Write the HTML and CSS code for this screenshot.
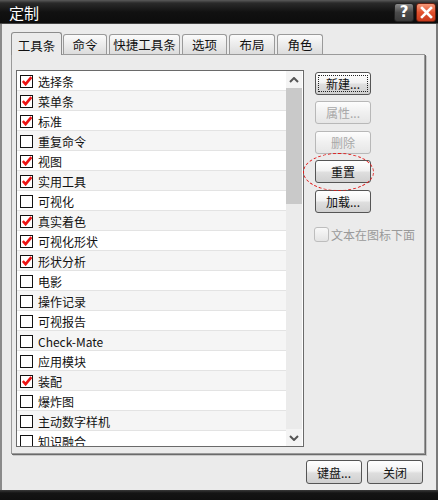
FILE: index.html
```html
<!DOCTYPE html>
<html>
<head>
<meta charset="utf-8">
<link rel="stylesheet" href="styles.css">
</head>
<body>
<div class="window">
  <div class="titlebar">
    <span class="title">定制</span>
    <div class="tbtns">
      <span class="tbtn help">?</span>
      <span class="tbtn close"><svg width="13" height="13" viewBox="0 0 13 13"><path d="M2 2 L11 11 M11 2 L2 11" stroke="#fff" stroke-width="2.6" stroke-linecap="square"/></svg></span>
    </div>
  </div>
  <div class="body">
    <div class="tabs">
      <span class="tab active">工具条</span>
      <span class="tab w44">命令</span>
      <span class="tab w71">快捷工具条</span>
      <span class="tab w45">选项</span>
      <span class="tab w46">布局</span>
      <span class="tab w46">角色</span>
    </div>
    <div class="panel">
      <div class="list">
        <div class="rows">
          <div class="row"><span class="cb on"></span>选择条</div>
          <div class="row"><span class="cb on"></span>菜单条</div>
          <div class="row"><span class="cb on"></span>标准</div>
          <div class="row"><span class="cb"></span>重复命令</div>
          <div class="row"><span class="cb on"></span>视图</div>
          <div class="row"><span class="cb on"></span>实用工具</div>
          <div class="row"><span class="cb"></span>可视化</div>
          <div class="row"><span class="cb on"></span>真实着色</div>
          <div class="row"><span class="cb on"></span>可视化形状</div>
          <div class="row"><span class="cb on"></span>形状分析</div>
          <div class="row"><span class="cb"></span>电影</div>
          <div class="row"><span class="cb"></span>操作记录</div>
          <div class="row"><span class="cb"></span>可视报告</div>
          <div class="row"><span class="cb"></span>Check-Mate</div>
          <div class="row"><span class="cb"></span>应用模块</div>
          <div class="row"><span class="cb on"></span>装配</div>
          <div class="row"><span class="cb"></span>爆炸图</div>
          <div class="row"><span class="cb"></span>主动数字样机</div>
          <div class="row"><span class="cb"></span>知识融合</div>
        </div>
        <div class="scrollbar">
          <div class="arrow"><svg width="10" height="6" viewBox="0 0 10 6"><path d="M1 5 L5 1 L9 5" fill="none" stroke="#555" stroke-width="2"/></svg></div>
          <div class="thumb"></div>
          <div class="track"></div>
          <div class="arrow"><svg width="10" height="6" viewBox="0 0 10 6"><path d="M1 1 L5 5 L9 1" fill="none" stroke="#555" stroke-width="2"/></svg></div>
        </div>
      </div>
      <div class="side">
        <button class="btn focus"><span>新建...</span></button>
        <button class="btn dis m6">属性...</button>
        <button class="btn dis m7">删除</button>
        <button class="btn m6">重置</button>
        <button class="btn m7">加载...</button>
        <label class="opt"><span class="optbox"></span>文本在图标下面</label>
        <div class="ellipse"></div>
      </div>
    </div>
    <div class="footer">
      <button class="btn fbtn">键盘...</button>
      <button class="btn fbtn">关闭</button>
    </div>
  </div>
  <div class="bottombar"></div>
</div>
</body>
</html>
```

FILE: styles.css
```css
* { box-sizing: border-box; }
html, body { margin: 0; padding: 0; }
body {
  width: 438px;
  height: 500px;
  overflow: hidden;
  font-family: "Noto Sans CJK SC", "Noto Sans", sans-serif;
  font-size: 12px;
  color: #111;
  background: #1a1a1a;
}
.window {
  width: 438px;
  height: 500px;
  display: flex;
  flex-direction: column;
}
.titlebar {
  height: 24px;
  flex: none;
  display: flex;
  align-items: center;
  justify-content: space-between;
  padding: 0 2px 0 9px;
  background: linear-gradient(#5a5a5a 0, #2a2a2a 3px, #111 12px, #0c0c0c 24px);
  border-bottom: 1px solid #444;
}
.title {
  color: #fff;
  font-size: 15px;
  line-height: 20px;
  margin-top: 2px;
}
.tbtns { display: flex; gap: 2px; margin-top: 1px; }
.tbtn {
  width: 20px;
  height: 19px;
  border-radius: 3px;
  display: flex;
  align-items: center;
  justify-content: center;
}
.help {
  background: linear-gradient(#8a8a8a, #4a4a4a 50%, #3a3a3a);
  border: 1px solid #222;
  color: #fff;
  font-family: "DejaVu Sans", sans-serif;
  font-weight: bold;
  font-size: 15px;
}
.close {
  background: linear-gradient(#f59a7a, #e2512d 50%, #c83a1c);
  border: 1px solid #6a2010;
}
.body {
  flex: 1;
  background: #ebebeb;
  border-left: 2px solid #8a8a8a;
  border-right: 2px solid #7a7a7a;
  padding: 7px 0 0 9px;
  display: flex;
  flex-direction: column;
}
.tabs {
  display: flex;
  align-items: flex-end;
  height: 23px;
  position: relative;
  z-index: 2;
}
.tab {
  height: 20px;
  margin-right: 2px;
  border: 1px solid #9a9a9a;
  border-bottom: none;
  border-radius: 3px 3px 0 0;
  background: linear-gradient(#fbfbfb, #dcdcdc);
  display: flex;
  align-items: center;
  justify-content: center;
  font-size: 12.5px;
}
.tab.active {
  width: 51px;
  height: 23px;
  background: #ebebeb;
  border-color: #8c8c8c;
  margin-right: 1px;
  padding-top: 2px;
  margin-bottom: -1px;
}
.w44 { width: 44px; }
.w71 { width: 71px; }
.w45 { width: 45px; }
.w46 { width: 46px; }
.panel {
  width: 414px;
  height: 400px;
  border: 1px solid #9a9a9a;
  box-shadow: 1px 1px 0 #6a6a6a, 2px 2px 0 #c8c8c8;
  display: flex;
  padding: 15px 0 0 4px;
  position: relative;
}
.list {
  width: 288px;
  height: 377px;
  border: 1px solid #6a6a6a;
  background: #fff;
  display: flex;
  overflow: hidden;
}
.rows {
  flex: 1;
  overflow: hidden;
}
.row {
  height: 20px;
  border-bottom: 1px solid #e3e3e3;
  display: flex;
  align-items: center;
  padding: 2px 0 0 3px;
  font-size: 12px;
  color: #111;
  white-space: nowrap;
}
.row:nth-child(even) { background: #f5f5f5; }
.cb {
  width: 13px;
  height: 13px;
  border: 1px solid #111;
  background: #fff;
  margin-right: 5px;
  flex: none;
  position: relative;
}
.cb.on::after {
  content: "";
  position: absolute;
  left: 1px;
  top: 0px;
  width: 10px;
  height: 10px;
  background: no-repeat center/10px 10px url("data:image/svg+xml;utf8,<svg xmlns='http://www.w3.org/2000/svg' viewBox='0 0 10 10'><path d='M0.8 5 L3.6 8.2 L9.4 1.2' fill='none' stroke='%23ee1111' stroke-width='2.6' stroke-linejoin='miter'/></svg>");
}
.scrollbar {
  width: 16px;
  flex: none;
  display: flex;
  flex-direction: column;
  background: #ebebeb;
  margin-right: 1px;
}
.arrow {
  height: 17px;
  background: #f4f4f4;
  display: flex;
  align-items: center;
  justify-content: center;
  flex: none;
}
.thumb {
  height: 116px;
  background: #c9c9c9;
  flex: none;
}
.track { flex: 1; background: #ebebeb; }
.side {
  display: flex;
  flex-direction: column;
  align-items: flex-start;
  padding: 2px 0 0 11px;
  position: relative;
}
.btn {
  width: 56px;
  height: 23px;
  border: 1px solid #555;
  border-radius: 3px;
  background: linear-gradient(#ffffff, #f2f2f2 45%, #dedede 55%, #d0d0d0);
  font-family: "Noto Sans CJK SC", sans-serif;
  font-size: 12px;
  color: #111;
  padding: 0;
  display: flex;
  align-items: center;
  justify-content: center;
}
.btn.focus span {
  display: flex;
  align-items: center;
  justify-content: center;
  width: 50px;
  height: 17px;
  border: 1px dotted #222;
}
.btn.dis {
  border-color: #b8b8b8;
  color: #a8a8a8;
  background: linear-gradient(#fdfdfd, #f0f0f0 50%, #e6e6e6);
}
.m6 { margin-top: 6px; }
.m7 { margin-top: 7px; }
.opt {
  margin-top: 13px;
  margin-left: -1px;
  display: flex;
  align-items: center;
  color: #9a9a9a;
  font-size: 12px;
}
.optbox {
  width: 15px;
  height: 15px;
  border: 1px solid #bdbdbd;
  border-radius: 3px;
  background: linear-gradient(#f8f8f8, #e4e4e4);
  margin-right: 2px;
}
.ellipse {
  position: absolute;
  left: -1px;
  top: 83px;
  width: 71px;
  height: 38px;
  border: 1px dashed #e01818;
  border-radius: 50%;
}
.footer {
  display: flex;
  justify-content: flex-end;
  gap: 5px;
  padding: 6px 13px 0 0;
}
.fbtn { width: 56px; height: 24px; }
.bottombar {
  height: 10px;
  flex: none;
  background: linear-gradient(#3a3a3a, #141414 3px, #101010);
}
```
